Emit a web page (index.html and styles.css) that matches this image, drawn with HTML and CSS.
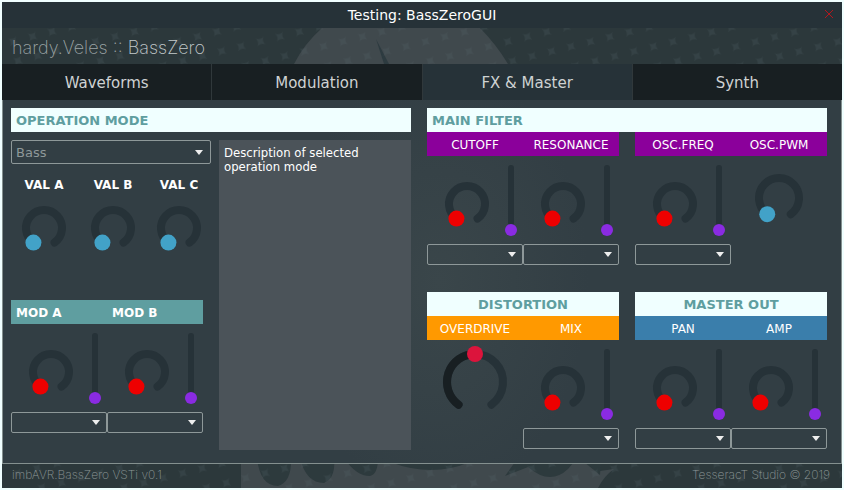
FILE: index.html
```html
<!DOCTYPE html>
<html lang="en">
<head>
<meta charset="utf-8">
<title>Testing: BassZeroGUI</title>
<link rel="stylesheet" href="styles.css">
</head>
<body>
<div class="window">
  <svg class="backdrop" viewBox="0 0 840 460" preserveAspectRatio="xMidYMid slice" aria-hidden="true">
    <defs>
      <pattern id="stars" width="20" height="20" patternUnits="userSpaceOnUse" patternTransform="translate(-1 6) rotate(-14)">
        <path d="M6 6Q10 9 14 6Q11 10 14 14Q10 11 6 14Q9 10 6 6Z" fill="#5b6c72"/>
      </pattern>
    </defs>
    <rect width="840" height="460" fill="#2c383b"/>
    <path d="M292 36Q302 16 320 0H478Q494 16 506 36V430H590L598 443L612 441Q602 448 596 460H239V430H292Z" fill="#40494d"/>
    <path d="M374 11L387 36H382Z" fill="#2d3b40"/>
    <path d="M255 430Q258 458 276 458Q290 454 289 430ZM298 430Q304 455 322 455Q334 450 332 430ZM342 430Q354 448 368 448Q376 446 376 430ZM388 434Q430 450 468 434V430H388ZM513 434L503 448Q516 443 526 439Q548 458 566 441L572 434Z" fill="#2d3a3d"/>
    <path d="M582 434L598 447L599 434Z" fill="#2d3a3d"/>
    <rect width="840" height="460" fill="url(#stars)" opacity=".2"/>
  </svg>
  <header class="titlebar">
    <h1 class="title">Testing: BassZeroGUI</h1>
    <button class="close" type="button" aria-label="Close">
      <svg viewBox="0 0 10 10" width="10" height="10"><path d="M1 1L9 9M9 1L1 9" stroke="#b3171c" fill="none"/></svg>
    </button>
  </header>
  <div class="brand"><span class="brand-maker">hardy.Veles ::</span> BassZero</div>
  <nav class="tabs">
    <button type="button" class="tab">Waveforms</button>
    <button type="button" class="tab">Modulation</button>
    <button type="button" class="tab tab-active">FX &amp; Master</button>
    <button type="button" class="tab">Synth</button>
  </nav>
  <main class="content">
    <section class="column">
      <h2 class="heading">OPERATION MODE</h2>
      <div class="operation">
        <div class="operation-controls">
          <select class="combo combo-mode" aria-label="Operation mode"><option>Bass</option></select>
          <div class="values">
            <label class="value">VAL A<span class="dial" data-r="18" data-color="#42a2c8"></span></label>
            <label class="value">VAL B<span class="dial" data-r="18" data-color="#42a2c8"></span></label>
            <label class="value">VAL C<span class="dial" data-r="18" data-color="#42a2c8"></span></label>
          </div>
          <div class="mods">
            <div class="labels labels-mod"><span>MOD A</span><span>MOD B</span></div>
            <div class="modules"><div class="module" data-name="Mod A"></div><div class="module" data-name="Mod B"></div></div>
          </div>
        </div>
        <textarea class="description" aria-label="Description" readonly>Description of selected operation mode</textarea>
      </div>
    </section>
    <section class="column">
      <h2 class="heading">MAIN FILTER</h2>
      <div class="pair pair-filter">
        <div>
          <div class="labels labels-filter"><span>CUTOFF</span><span>RESONANCE</span></div>
          <div class="modules"><div class="module" data-name="Cutoff"></div><div class="module" data-name="Resonance"></div></div>
        </div>
        <div>
          <div class="labels labels-filter"><span>OSC.FREQ</span><span>OSC.PWM</span></div>
          <div class="modules">
            <div class="module" data-name="Osc frequency"></div>
            <div class="solo"><span class="dial" data-r="20" data-color="#42a2c8" data-name="Osc PWM"></span></div>
          </div>
        </div>
      </div>
      <div class="pair">
        <div>
          <h2 class="heading heading-center">DISTORTION</h2>
          <div class="labels labels-distortion"><span>OVERDRIVE</span><span>MIX</span></div>
          <div class="modules">
            <div class="solo"><span class="dial" data-r="28" data-color="#dc143c" data-value="50" data-name="Overdrive"></span></div>
            <div class="module" data-name="Mix"></div>
          </div>
        </div>
        <div>
          <h2 class="heading heading-center">MASTER OUT</h2>
          <div class="labels labels-master"><span>PAN</span><span>AMP</span></div>
          <div class="modules"><div class="module" data-name="Pan"></div><div class="module" data-name="Amp"></div></div>
        </div>
      </div>
    </section>
  </main>
  <footer class="footer"><span>imbAVR.BassZero VSTi v0.1</span><span>TesseracT Studio © 2019</span></footer>
</div>
<script src="controls.js"></script>
</body>
</html>
```
FILE: styles.css
```css
* { box-sizing: border-box; }

body {
  margin: 0;
  font-family: "DejaVu Sans", Verdana, sans-serif;
  font-size: 12px;
  color: #fff;
  background: #f0ffff;
}

button, select, textarea { font-family: inherit; }
h1, h2 { margin: 0; }

.window {
  position: relative;
  display: flex;
  flex-direction: column;
  min-height: 100vh;
  border: 2px solid #f0ffff;
  background: #2d393c;
}

.window > * { position: relative; }

.window > .backdrop {
  position: absolute;
  top: 26px;
  left: 0;
  width: 100%;
  height: calc(100% - 26px);
}

.titlebar {
  display: flex;
  height: 26px;
  align-items: center;
  padding-left: 22px;
  background: #263238;
}

.title {
  flex: 1;
  font-size: 14px;
  font-weight: 400;
  line-height: 28px;
  text-align: center;
}

.close {
  display: flex;
  width: 22px;
  height: 22px;
  padding: 5px 4px;
  border: 0;
  background: none;
}

.brand {
  height: 36px;
  padding-left: 10px;
  font-family: Inter, "Liberation Sans", sans-serif;
  font-size: 18px;
  font-weight: 200;
  line-height: 40px;
  color: #c3cacb;
}

.brand-maker { color: #9ca5a6; }

.tabs { display: flex; height: 36px; }

.tab {
  flex: 1;
  padding: 2px 0 0;
  border: 0;
  border-right: 1px solid #30383b;
  background: #181f22;
  color: #cfd2d3;
  font-size: 15px;
}

.tab-active { background: #263238; }
.tab:last-child { border-right: 0; }

.content {
  display: grid;
  flex: 1;
  grid-template-columns: 1fr 1fr;
  gap: 16px;
  padding: 8px 14px 13px 8px;
  border: 1px solid #84908f;
  border-top: 0;
  background:
    radial-gradient(ellipse 150px 220px at 52% 50%, #3a464a 0%, #3a464a00 100%),
    #323e44;
}

.column { display: flex; flex-direction: column; }

.heading {
  height: 24px;
  padding: 0 5px;
  background: #f0ffff;
  color: #5f9ea0;
  font-size: 13px;
  line-height: 26px;
}

.heading-center { text-align: center; }

.operation {
  display: grid;
  flex: 1;
  grid-template-columns: 200fr 192fr;
  gap: 8px;
  padding-top: 8px;
}

.operation-controls { display: flex; flex-direction: column; }

.combo {
  width: 100%;
  min-width: 0;
  height: 21px;
  padding: 0 4px;
  appearance: none;
  border: 1px solid #8e9899;
  border-radius: 2px;
  background: url("data:image/svg+xml,%3Csvg xmlns='http://www.w3.org/2000/svg' width='8' height='5'%3E%3Cpath d='M0 0H8L4 5Z' fill='%23eeeeee'/%3E%3C/svg%3E") no-repeat right 6px center;
  color: #8e9899;
  font-size: 13px;
}

.combo-mode { height: 24px; background-position: right 7px center; }

.values {
  display: grid;
  grid-template-columns: minmax(0, 66fr) minmax(0, 72fr) minmax(0, 60fr);
  padding: 11px 2px 0 0;
}

.value {
  display: flex;
  flex-direction: column;
  align-items: center;
  gap: 1px;
  font-weight: 700;
  line-height: 20px;
}

.mods { width: 96%; margin-top: 40px; }

.description {
  padding: 6px 5px;
  border: 0;
  resize: none;
  background: #4b5359;
  color: #fff;
  font-family: "DejaVu Sans Condensed", "DejaVu Sans", sans-serif;
  font-size: 13px;
  line-height: 14px;
}

.pair { display: grid; grid-template-columns: 1fr 1fr; gap: 16px; }
.pair-filter { margin-bottom: 27px; }

.labels {
  display: grid;
  grid-template-columns: 1fr 1fr;
  height: 24px;
  line-height: 26px;
  text-align: center;
}

.labels-mod { background: #5f9ea0; font-weight: 700; text-align: left; }
.labels-mod span { padding-left: 5px; }
.labels-filter { background: #8b009b; }
.labels-distortion { background: #ff9900; }
.labels-master { background: #3a7eab; }

.modules { display: grid; grid-template-columns: 1fr 1fr; }

.module-controls {
  display: flex;
  height: 88px;
  align-items: flex-end;
  justify-content: space-between;
  padding: 0 6px 8px 8px;
}

.dial { position: relative; display: block; flex: none; width: 64px; height: 64px; }
.dial svg { display: block; overflow: visible; }

.dial input {
  position: absolute;
  inset: 0;
  width: 100%;
  height: 100%;
  margin: 0;
  opacity: 0;
}

.solo { display: flex; justify-content: center; padding-top: 10px; }

.fader {
  width: 12px;
  height: 71px;
  margin: 0;
  appearance: none;
  writing-mode: vertical-lr;
  direction: rtl;
  background: none;
}

.fader::-webkit-slider-runnable-track {
  width: 6px;
  height: 71px;
  border-radius: 3px;
  background: #263238;
}

.fader::-webkit-slider-thumb {
  width: 12px;
  height: 12px;
  margin-left: -3px;
  appearance: none;
  border-radius: 50%;
  background: #8a2be2;
}

.footer {
  display: flex;
  height: 24px;
  justify-content: space-between;
  padding: 0 12px 0 10px;
  font-family: Inter, "Liberation Sans", sans-serif;
  font-weight: 200;
  line-height: 22px;
  color: #8e9899;
}
```
FILE: controls.js
```js
const START = 216;
const SWEEP = 288;

// Point on a dial of radius r; angles run clockwise from the top.
function point(r, degrees) {
  const a = degrees * Math.PI / 180;
  return [r * Math.sin(a), -r * Math.cos(a)];
}

function arc(r, from, to) {
  const large = to - from > 180 ? 1 : 0;
  return `M${point(r, from)}A${r} ${r} 0 ${large} 1 ${point(r, to)}`;
}

function drawDial(el) {
  const r = Number(el.dataset.r);
  const value = Number(el.dataset.value || 0);
  const angle = START + SWEEP * value / 100;
  const [x, y] = point(r, angle);
  const filled = value > 0
    ? `<path d="${arc(r, START, angle)}" stroke="#181f22"/>` : '';
  const name = el.dataset.name ? ` aria-label="${el.dataset.name}"` : '';
  el.innerHTML =
    `<svg viewBox="-32 -32 64 64" width="64" height="64" aria-hidden="true">
      <g fill="none" stroke-width="8" stroke-linecap="round">
        <path d="${arc(r, START, START + SWEEP)}" stroke="#263238"/>${filled}
      </g>
      <circle cx="${x}" cy="${y}" r="8" fill="${el.dataset.color}"/>
    </svg><input type="range" value="${value}"${name}>`;
}

document.querySelectorAll('.module').forEach(el => {
  const name = el.dataset.name;
  el.innerHTML =
    `<div class="module-controls">
      <span class="dial" data-r="18" data-color="#ee0000" data-name="${name}"></span>
      <input class="fader" type="range" value="0" aria-label="${name} amount">
    </div>
    <select class="combo" aria-label="${name} source"><option></option></select>`;
});

document.querySelectorAll('.dial').forEach(drawDial);
```
